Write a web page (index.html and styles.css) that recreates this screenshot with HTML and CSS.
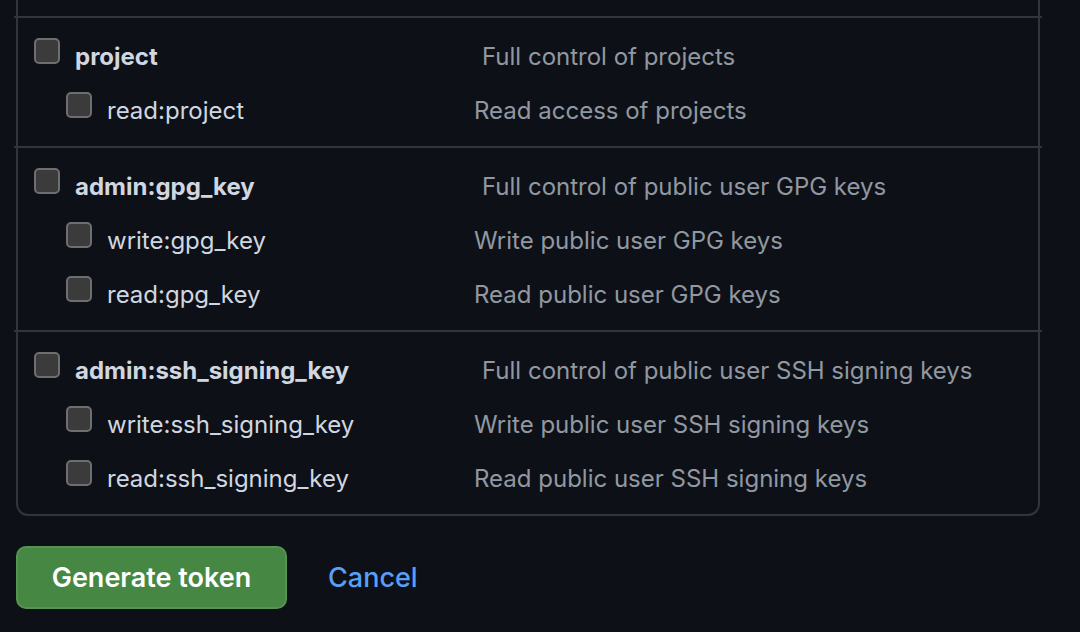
FILE: index.html
```html
<!DOCTYPE html>
<html>
<head>
<meta charset="utf-8">
<link rel="stylesheet" href="styles.css">
</head>
<body>
<div class="page">
  <div class="scopes">
    <div class="top-space"></div>
    <hr class="divider">
    <div class="group">
      <div class="row parent">
        <span class="cb"></span>
        <span class="name">project</span>
        <span class="desc">Full control of projects</span>
      </div>
      <div class="row child">
        <span class="cb"></span>
        <span class="name">read:project</span>
        <span class="desc">Read access of projects</span>
      </div>
    </div>
    <hr class="divider">
    <div class="group">
      <div class="row parent">
        <span class="cb"></span>
        <span class="name">admin:gpg_key</span>
        <span class="desc">Full control of public user GPG keys</span>
      </div>
      <div class="row child">
        <span class="cb"></span>
        <span class="name">write:gpg_key</span>
        <span class="desc">Write public user GPG keys</span>
      </div>
      <div class="row child">
        <span class="cb"></span>
        <span class="name">read:gpg_key</span>
        <span class="desc">Read public user GPG keys</span>
      </div>
    </div>
    <hr class="divider">
    <div class="group">
      <div class="row parent">
        <span class="cb"></span>
        <span class="name">admin:ssh_signing_key</span>
        <span class="desc">Full control of public user SSH signing keys</span>
      </div>
      <div class="row child">
        <span class="cb"></span>
        <span class="name">write:ssh_signing_key</span>
        <span class="desc">Write public user SSH signing keys</span>
      </div>
      <div class="row child">
        <span class="cb"></span>
        <span class="name">read:ssh_signing_key</span>
        <span class="desc">Read public user SSH signing keys</span>
      </div>
    </div>
  </div>
  <div class="actions">
    <button class="btn-primary" type="button">Generate token</button>
    <a class="cancel" href="#">Cancel</a>
  </div>
</div>
</body>
</html>
```

FILE: styles.css
```css
html, body {
  margin: 0;
  padding: 0;
  background: #0d1117;
}
body {
  font-family: Inter, "Noto Sans", sans-serif;
  color: #d1d7e0;
  width: 1080px;
  height: 632px;
  overflow: hidden;
}
.page {
  padding-left: 16px;
}
.scopes {
  width: 1020px;
  border: 2px solid #30363d;
  border-top: none;
  border-radius: 0 0 12px 12px;
}
.top-space {
  height: 16px;
}
.divider {
  border: none;
  height: 2px;
  background: #30363d;
  margin: 0 -4px;
}
.group {
  padding: 11px 0 9px;
}
.row {
  display: flex;
  align-items: center;
  height: 54px;
  font-size: 24px;
}
.cb {
  flex: none;
  width: 22px;
  height: 22px;
  border: 2px solid #6e6e6e;
  border-radius: 5px;
  background: #3b3b3b;
  margin-bottom: 10px;
}
.parent {
  padding-left: 16px;
}
.child {
  padding-left: 48px;
}
.name {
  margin-left: 15px;
}
.parent .name {
  font-weight: 700;
  width: 407px;
}
.child .name {
  width: 367px;
}
.desc {
  color: #9198a1;
}
.actions {
  display: flex;
  align-items: center;
  margin-top: 30px;
}
.btn-primary {
  width: 271px;
  height: 63px;
  background: #468843;
  border: 2px solid #55954f;
  border-radius: 10px;
  color: #ffffff;
  font-family: Inter, "Noto Sans", sans-serif;
  font-size: 27px;
  font-weight: 600;
  padding: 0;
}
.cancel {
  margin-left: 41px;
  color: #5a9ff7;
  font-size: 27px;
  font-weight: 500;
  text-decoration: none;
}
```
